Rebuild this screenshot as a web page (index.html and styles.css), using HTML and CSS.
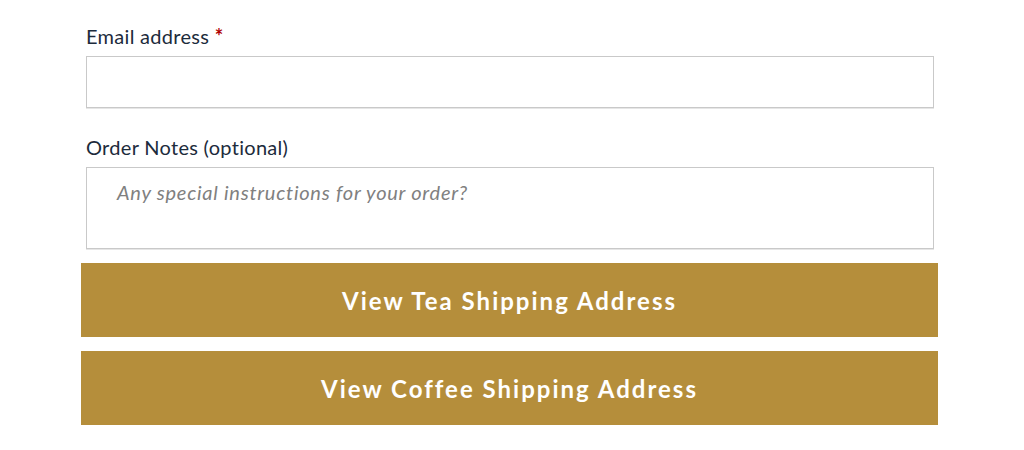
FILE: index.html
```html
<!DOCTYPE html>
<html lang="en">
<head>
    <meta charset="UTF-8">
    <meta name="viewport" content="width=device-width, initial-scale=1.0">
    <title>Checkout Details</title>
    <link rel="stylesheet" href="styles.css">
</head>
<body>
    <div class="checkout-container">
        <form id="checkout-form">
            <div class="input-field email">
                <label for="email">Email address <span class="required">*</span></label>
                <input type="email" id="email" name="email" required>
            </div>
            <div class="input-field notes">
                <label for="order-notes">Order Notes (optional)</label>
                <textarea id="order-notes" name="order-notes" placeholder="Any special instructions for your order?"></textarea>
            </div>
            <div class="actions">
                <button type="button" class="ship-btn">View Tea Shipping Address</button>
                <button type="button" class="ship-btn">View Coffee Shipping Address</button>
            </div>
        </form>
    </div>
</body>
</html>
```

FILE: styles.css
```css
body {
    font-family: Lato, "Open Sans", sans-serif;
    background-color: #fff;
    margin: 0;
    padding: 0;
}
.checkout-container {
    width: 848px;
    margin-left: 86px;
    padding-top: 22px;
}
.input-field label {
    display: block;
    font-size: 20px;
    line-height: 28px;
    letter-spacing: 0.3px;
    color: #1c2b3c;
    margin-bottom: 6px;
}
.required {
    color: #b00000;
    font-weight: bold;
}
.input-field input,
.input-field textarea {
    display: block;
    box-sizing: border-box;
    width: 100%;
    border: 1px solid #c9c9c9;
    box-shadow: 0 1px 0 #e6e6e6;
    background: #fff;
    font-family: inherit;
    font-size: 20px;
    outline: none;
}
.input-field input {
    height: 52px;
    padding: 0 30px;
}
.input-field textarea {
    height: 82px;
    padding: 12px 30px;
    resize: none;
}
.input-field textarea::placeholder {
    color: #808080;
    font-style: italic;
    letter-spacing: 0.75px;
}
.email {
    margin-bottom: 25px;
}
.notes {
    margin-bottom: 14px;
}
.actions {
    margin-left: -5px;
    width: 857px;
    display: flex;
    flex-direction: column;
    gap: 14px;
}
.ship-btn {
    height: 74px;
    width: 100%;
    background-color: #b58e3b;
    border: none;
    color: #fff;
    font-family: inherit;
    font-size: 24px;
    font-weight: bold;
    letter-spacing: 2px;
    cursor: pointer;
}
.ship-btn:hover {
    background-color: #a37e30;
}
```
